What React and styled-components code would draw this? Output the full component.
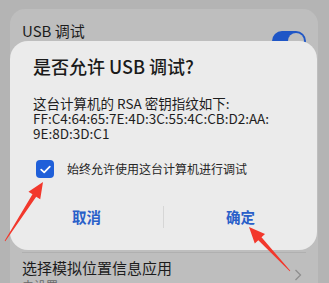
import React from 'react';
import styled, { createGlobalStyle } from 'styled-components';

const Global = createGlobalStyle`
  html, body {
    margin: 0;
    padding: 0;
  }
  body {
    font-family: "Noto Sans CJK SC", "Noto Sans", sans-serif;
    background: #b4b4b4;
  }
`;

const Screen = styled.div`
  position: relative;
  width: 329px;
  height: 283px;
  overflow: hidden;
  background: #b4b4b4;
  padding: 9px 11px 0 10px;
  box-sizing: border-box;
`;

const Card = styled.div`
  background: #bebebe;
  border-radius: 15px;
  display: flex;
  flex-direction: column;
  padding: 0 12px;
`;

const Row = styled.div`
  display: flex;
  align-items: center;
  justify-content: space-between;
  height: ${(p) => p.h}px;
  border-top: ${(p) => (p.line ? '1px solid #b0b0b0' : 'none')};
  box-sizing: border-box;
`;

const RowText = styled.div`
  display: flex;
  flex-direction: column;
  align-self: flex-start;
  padding-top: ${(p) => p.top || 10}px;
`;

const Title = styled.div`
  font-size: 15px;
  line-height: 20px;
  color: #1c1c1c;
`;

const Sub = styled.div`
  font-size: 12px;
  line-height: 16px;
  color: #6a6a6a;
`;

const Toggle = styled.div`
  position: relative;
  width: 34px;
  height: 20px;
  border-radius: 10px;
  background: #1f56c6;
  align-self: flex-start;
  margin-top: 22px;
  &::after {
    content: '';
    position: absolute;
    right: 2px;
    top: 2px;
    width: 16px;
    height: 16px;
    border-radius: 50%;
    background: #bebebe;
  }
`;

const Chevron = styled.svg`
  width: 8px;
  height: 12px;
  align-self: flex-start;
  margin-top: 16px;
  margin-right: 4px;
`;

const Dialog = styled.div`
  position: absolute;
  left: 10px;
  top: 41px;
  width: 307px;
  height: 209px;
  background: #ebebeb;
  border-radius: 18px;
  box-sizing: border-box;
  padding: 12px 23px 0 23px;
  display: flex;
  flex-direction: column;
`;

const DialogTitle = styled.div`
  font-size: 18px;
  line-height: 26px;
  font-weight: 500;
  color: #1a1a1a;
`;

const Body = styled.div`
  margin-top: 17px;
  font-size: 13.5px;
  line-height: 15px;
  color: #1e1e1e;
  word-break: break-all;
`;

const CheckRow = styled.label`
  display: flex;
  align-items: center;
  gap: 13px;
  margin-top: 19px;
  padding-left: 3px;
`;

const Box = styled.div`
  width: 18px;
  height: 18px;
  border-radius: 4px;
  background: #1f5fd9;
  display: flex;
  align-items: center;
  justify-content: center;
`;

const CheckLabel = styled.span`
  font-size: 12px;
  line-height: 16px;
  color: #262626;
`;

const Buttons = styled.div`
  display: flex;
  align-items: center;
  margin: 28px -23px 0;
`;

const Btn = styled.div`
  flex: 1;
  text-align: center;
  font-size: 14.5px;
  line-height: 20px;
  font-weight: 700;
  color: #2a60c9;
`;

const Divider = styled.div`
  width: 1px;
  height: 22px;
  background: #d6d6d6;
`;

const Arrows = styled.svg`
  position: absolute;
  left: 0;
  top: 0;
  width: 329px;
  height: 283px;
  pointer-events: none;
`;

function Arrow({ x1, y1, x2, y2 }) {
  const dx = x2 - x1;
  const dy = y2 - y1;
  const len = Math.hypot(dx, dy);
  const ux = dx / len;
  const uy = dy / len;
  const px = -uy;
  const py = ux;
  const headLen = 16;
  const headW = 7;
  const bx = x2 - ux * headLen;
  const by = y2 - uy * headLen;
  const neck = 2.2;
  const pts = [
    [x1 + px * 0.4, y1 + py * 0.4],
    [bx + px * neck, by + py * neck],
    [bx + px * headW, by + py * headW],
    [x2, y2],
    [bx - px * headW, by - py * headW],
    [bx - px * neck, by - py * neck],
    [x1 - px * 0.4, y1 - py * 0.4],
  ];
  return <polygon points={pts.map((p) => p.join(',')).join(' ')} fill="#f2382c" />;
}

export default function App() {
  return (
    <Screen>
      <Global />
      <Card>
        <Row h={64}>
          <RowText top={12}>
            <Title>USB 调试</Title>
          </RowText>
          <Toggle />
        </Row>
        <Row h={60} line />
        <Row h={60} line />
        <Row h={59} line />
        <Row h={60} line>
          <RowText top={5}>
            <Title>选择模拟位置信息应用</Title>
            <Sub>未设置</Sub>
          </RowText>
          <Chevron viewBox="0 0 8 12">
            <path d="M1.5 1 L6.5 6 L1.5 11" fill="none" stroke="#8e8e8e" strokeWidth="1.3" />
          </Chevron>
        </Row>
      </Card>

      <Dialog>
        <DialogTitle>是否允许 USB 调试?</DialogTitle>
        <Body>
          这台计算机的 RSA 密钥指纹如下:
          <br />
          FF:C4:64:65:7E:4D:3C:55:4C:CB:D2:AA:
          <br />
          9E:8D:3D:C1
        </Body>
        <CheckRow>
          <Box>
            <svg width="11" height="9" viewBox="0 0 11 9">
              <path d="M1.2 4.6 L4.2 7.4 L9.8 1.6" fill="none" stroke="#fff" strokeWidth="1.7" strokeLinecap="round" strokeLinejoin="round" />
            </svg>
          </Box>
          <CheckLabel>始终允许使用这台计算机进行调试</CheckLabel>
        </CheckRow>
        <Buttons>
          <Btn>取消</Btn>
          <Divider />
          <Btn>确定</Btn>
        </Buttons>
      </Dialog>

      <Arrows viewBox="0 0 329 283">
        <Arrow x1={5} y1={241} x2={43} y2={182} />
        <Arrow x1={290} y1={271} x2={249} y2={227} />
      </Arrows>
    </Screen>
  );
}
